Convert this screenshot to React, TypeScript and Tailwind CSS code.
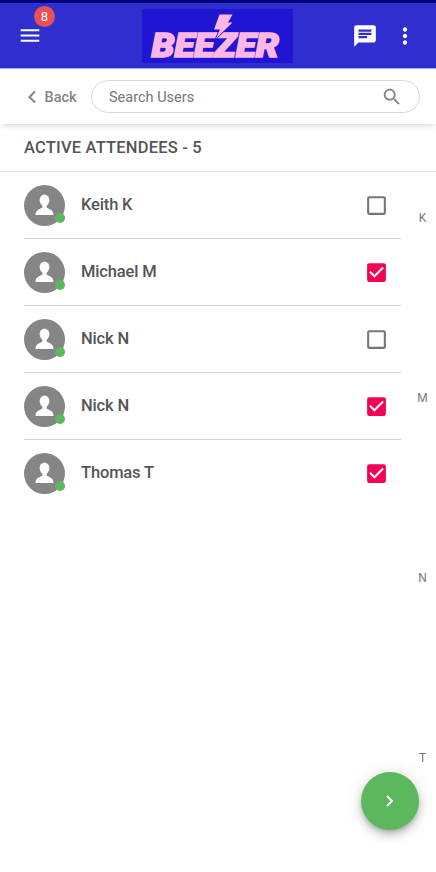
import React, { useState } from "react";

type Attendee = { id: number; name: string; selected: boolean };

const ATTENDEES: Attendee[] = [
  { id: 1, name: "Keith K", selected: false },
  { id: 2, name: "Michael M", selected: true },
  { id: 3, name: "Nick N", selected: false },
  { id: 4, name: "Nick N", selected: true },
  { id: 5, name: "Thomas T", selected: true },
];

const LETTERS = ["K", "M", "N", "T"];

function Logo() {
  return (
    <svg width="151" height="54" viewBox="0 0 151 54" className="block overflow-visible bg-[#2015d2]">
      <text
        x="9.5"
        y="47.5"
        textLength="127.5"
        lengthAdjust="spacingAndGlyphs"
        className="fill-[#ffb8e6] stroke-[#ffb8e6] font-['Roboto'] text-[32.5px] leading-none font-black italic"
        strokeWidth="1.6"
      >
        BEEZER
      </text>
      <path
        d="M77.500 5.500h13l-4.500 8h4.500L73.500 30l4.500-9.500h-6z"
        className="fill-[#ffb8e6] stroke-[#2015d2]"
        strokeWidth="1.6"
        paintOrder="stroke"
      />
    </svg>
  );
}

function Header() {
  return (
    <header className="flex h-[69px] border-t-[3px] border-b border-t-[#00007d] border-b-[#a5a5e8] bg-[#2f2fd0] text-white">
      <div className="relative w-[142px] pt-[20px] pl-[18px]">
        <svg width="24" height="24" viewBox="0 0 24 24" fill="currentColor">
          <path d="M2.7 6.300h18.6v2H2.7zM2.7 11.500h18.6v2H2.7zM2.7 16.700h18.6v2H2.7z" />
        </svg>
        <span className="absolute top-[2.5px] left-[34px] flex h-[21px] w-[21px] items-center justify-center rounded-full bg-[#e94f55] text-[13px] leading-none">
          8
        </span>
      </div>
      <div className="pt-[6px]">
        <Logo />
      </div>
      <div className="flex flex-1 pt-[19.500px] pl-[58.500px]">
        <svg width="26" height="26" viewBox="0 0 24 24" fill="currentColor">
          <path d="M20 2H4c-1.100 0-1.990.9-1.990 2L2 22l4-4h14c1.100 0 2-.9 2-2V4c0-1.100-.9-2-2-2zM6 9h12v2H6V9zm8 5H6v-2h8v2zm4-6H6V6h12v2z" />
        </svg>
        <svg width="26" height="26" viewBox="0 0 24 24" fill="currentColor" className="ml-[14px]">
          <path d="M12 8c1.100 0 2-.9 2-2s-.9-2-2-2-2 .9-2 2 .9 2 2 2zm0 2c-1.100 0-2 .9-2 2s.9 2 2 2 2-.9 2-2-.9-2-2-2zm0 6c-1.100 0-2 .9-2 2s.9 2 2 2 2-.9 2-2-.9-2-2-2z" />
        </svg>
      </div>
    </header>
  );
}

function SearchBar() {
  return (
    <div className="flex h-[55px] items-center bg-white pr-4 pl-[27px] shadow-[0_4px_5px_-2px_rgba(0,0,0,0.15)]">
      <button className="flex w-[64px] items-center text-[14.500px] font-medium text-[#858585]">
        <svg width="10" height="14" viewBox="0 0 10 14" fill="none" stroke="currentColor" strokeWidth="2">
          <path d="M8 1.500 2.500 7 8 12.500" />
        </svg>
        <span className="ml-[7.500px] pt-[2px]">Back</span>
      </button>
      <div className="flex h-[33px] flex-1 items-center rounded-full border border-[#d9d9d9] pr-[16px] pl-[17px]">
        <span className="flex-1 pt-[2px] text-[14.500px] text-[#777]">Search Users</span>
        <svg width="22" height="22" viewBox="0 0 24 24" className="fill-[#858585]">
          <path d="M15.500 14h-.79l-.28-.27C15.410 12.590 16 11.110 16 9.500 16 5.910 13.090 3 9.500 3S3 5.910 3 9.500 5.910 16 9.500 16c1.610 0 3.090-.59 4.230-1.570l.27.28v.79l5 4.990L20.490 19l-4.990-5zm-6 0C7.010 14 5 11.990 5 9.500S7.010 5 9.500 5 14 7.010 14 9.500 11.990 14 9.500 14z" />
        </svg>
      </div>
    </div>
  );
}

function Avatar() {
  return (
    <div className="relative h-[41px] w-[41px]">
      <svg width="41" height="41" viewBox="0 0 41 41">
        <circle cx="20.500" cy="20.500" r="20.500" fill="#858585" />
        <ellipse cx="20.500" cy="15.300" rx="4.900" ry="5.700" fill="#fff" />
        <path d="M18.300 18h4.400v4.700c3.500 1.600 6.800 2.500 6.800 7.300h-18c0-4.800 3.300-5.700 6.800-7.300z" fill="#fff" />
      </svg>
      <span className="absolute right-0 bottom-[3px] h-[10px] w-[10px] rounded-full bg-[#5cb85c]" />
    </div>
  );
}

function Checkbox({ checked, onClick }: { checked: boolean; onClick: () => void }) {
  return (
    <button role="checkbox" aria-checked={checked} onClick={onClick}>
      <svg width="25" height="25" viewBox="0 0 24 24" className={checked ? "fill-[#f50057]" : "fill-[#757575]"}>
        {checked ? (
          <path d="M19 3H5c-1.110 0-2 .9-2 2v14c0 1.100.89 2 2 2h14c1.110 0 2-.9 2-2V5c0-1.100-.89-2-2-2zm-9 14l-5-5 1.410-1.410L10 14.170l7.590-7.590L19 8l-9 9z" />
        ) : (
          <path d="M19 5v14H5V5h14m0-2H5c-1.100 0-2 .9-2 2v14c0 1.100.9 2 2 2h14c1.100 0 2-.9 2-2V5c0-1.100-.9-2-2-2z" />
        )}
      </svg>
    </button>
  );
}

export default function App() {
  const [attendees, setAttendees] = useState(ATTENDEES);

  function toggle(id: number) {
    setAttendees((prev) => prev.map((a) => (a.id === id ? { ...a, selected: !a.selected } : a)));
  }

  return (
    <div className="relative h-[872px] w-[436px] overflow-hidden bg-white font-['Roboto','Liberation_Sans',sans-serif]">
      <Header />
      <SearchBar />
      <h1 className="flex h-[48px] items-center border-b border-[#e0e0e0] pt-[2px] pl-[24px] text-[16.500px] font-medium tracking-[0.2px] text-[#555]">
        ACTIVE ATTENDEES - 5
      </h1>

      <div className="flex">
        <ul className="w-[401px] pl-[24px]">
          {attendees.map((a) => (
            <li key={a.id} className="flex h-[67px] items-center border-b border-[#d4d4d4] pr-[12px] last:border-b-0">
              <Avatar />
              <span className="ml-[16px] flex-1 text-[16.500px] font-medium tracking-[-0.15px] text-[#555]">{a.name}</span>
              <Checkbox checked={a.selected} onClick={() => toggle(a.id)} />
            </li>
          ))}
        </ul>
        <nav className="flex flex-1 flex-col items-center gap-[164px] pt-[38px] pl-[8px] text-[12px] leading-4 text-[#777]">
          {LETTERS.map((l) => (
            <span key={l}>{l}</span>
          ))}
        </nav>
      </div>

      {/* floating next button */}
      <button className="absolute right-[17px] bottom-[42px] flex h-[58px] w-[58px] items-center justify-center rounded-full bg-[#5cb85c] text-white shadow-[0_3px_5px_-1px_rgba(0,0,0,0.2),0_6px_10px_rgba(0,0,0,0.14),0_1px_18px_rgba(0,0,0,0.12)]">
        <svg width="8" height="12" viewBox="0 0 8 12" fill="none" stroke="currentColor" strokeWidth="2">
          <path d="M1 1l5 5-5 5" />
        </svg>
      </button>
    </div>
  );
}
